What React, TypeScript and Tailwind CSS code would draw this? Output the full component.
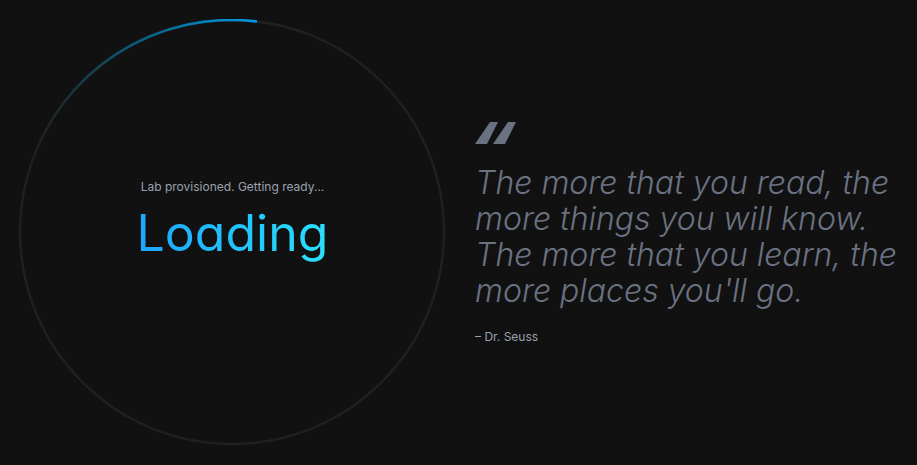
function ProgressRing() {
  return (
    <svg viewBox="0 0 427 427" className="col-start-1 row-start-1 block w-full" fill="none" aria-hidden="true">
      <defs>
        <linearGradient id="arc" gradientUnits="userSpaceOnUse" x1="238" y1="2" x2="16" y2="132">
          <stop offset="0" stopColor="#009bea" />
          <stop offset="0.3" stopColor="#0084c0" stopOpacity="0.8" />
          <stop offset="0.7" stopColor="#086d8c" stopOpacity="0.35" />
          <stop offset="1" stopColor="#1d4a52" stopOpacity="0" />
        </linearGradient>
      </defs>
      <circle cx="213" cy="213" r="212" stroke="#202020" strokeWidth="2.500" />
      <path d="M11 147A212 212 0 0 1 238 2.500" stroke="url(#arc)" strokeWidth="2.500" />
    </svg>
  );
}

export default function App() {
  return (
    <main className="grid min-h-screen grid-cols-[427fr_423fr] items-center gap-[29px] bg-[#111111] px-[19px] font-['Inter',sans-serif]">
      <section className="grid items-center" role="status">
        <ProgressRing />
        <div className="col-start-1 row-start-1 flex flex-col items-center gap-0.5 pb-[18px]">
          <p className="text-[12px] leading-4 text-gray-400">Lab provisioned. Getting ready...</p>
          <h1 className="bg-linear-to-r from-[#1ea5fc] to-[#2be0fb] bg-clip-text text-[50px] leading-[72px] font-normal text-transparent [font-feature-settings:'cv11']">
            Loading
          </h1>
        </div>
      </section>
      <figure className="pt-0.5">
        <svg viewBox="0 0 42 23" className="h-[23px] w-[42px] fill-gray-500" aria-hidden="true">
          <path d="M15 0h8L12 22H0zM33 0h8L30 22H18z" />
        </svg>
        <blockquote className="mt-5 text-[32px] leading-9 font-light whitespace-nowrap text-gray-500 italic [font-feature-settings:'cv11']">
          The more that you read, the
          <br />
          more things you will know.
          <br />
          The more that you learn, the
          <br />
          more places you'll go.
        </blockquote>
        <figcaption className="mt-5 text-[12px] leading-4 text-gray-400">– Dr. Seuss</figcaption>
      </figure>
    </main>
  );
}
